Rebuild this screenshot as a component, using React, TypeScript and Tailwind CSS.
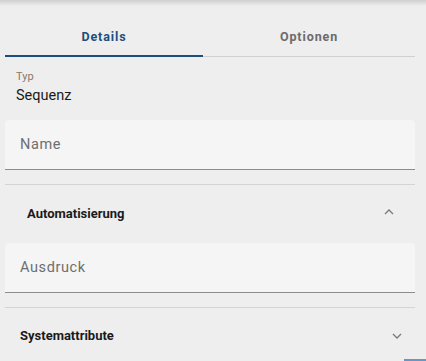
import React from "react"

function ChevronUp({ className }: { className?: string }) {
  return (
    <svg width="12" height="8" viewBox="0 0 12 8" className={className} fill="none" stroke="currentColor" strokeWidth="1.3">
      <path d="M2 6 L6 2 L10 6" />
    </svg>
  )
}

function ChevronDown({ className }: { className?: string }) {
  return (
    <svg width="12" height="8" viewBox="0 0 12 8" className={className} fill="none" stroke="currentColor" strokeWidth="1.3">
      <path d="M2 2 L6 6 L10 2" />
    </svg>
  )
}

function Field({ label }: { label: string }) {
  return (
    <div className="h-[50px] bg-[#f5f5f5] rounded-t-[4px] border-b border-[#8c8c8c] flex items-center px-[15px]">
      <span className="text-[14.5px] tracking-[0.6px] text-[#6e6e6e]">{label}</span>
    </div>
  )
}

export default function App() {
  return (
    <div
      className="relative w-[426px] h-[361px] bg-[#eeeeee] overflow-hidden"
      style={{ fontFamily: "Roboto, 'Liberation Sans', sans-serif" }}
    >
      <div className="absolute top-0 left-0 right-0 h-[6px] bg-gradient-to-b from-[#cfcfcf] to-transparent" />

      <div className="ml-[5px] w-[410px] pt-[15px]">
        {/* Tabs */}
        <div className="flex h-[42px] border-b border-[#d0d0d0]">
          <div className="w-[198px] flex items-center justify-center border-b-2 border-[#1d4f7c] -mb-px">
            <span className="text-[12.5px] font-bold tracking-[0.9px] text-[#1d4f7c] mt-[4px]">Details</span>
          </div>
          <div className="flex-1 flex items-center justify-center">
            <span className="text-[12.5px] font-bold tracking-[0.9px] text-[#6b6b6b] mt-[4px]">Optionen</span>
          </div>
        </div>

        {/* Typ */}
        <div className="pl-[11px] pt-[13px] h-[63px]">
          <div className="text-[11px] leading-[13px] text-[#8a7868]">Typ</div>
          <div className="text-[14.5px] leading-[18px] mt-[4px] text-[#1a1a1a]">Sequenz</div>
        </div>

        <Field label="Name" />

        <div className="mt-[14px] border-t border-[#d4d4d4]" />

        {/* Automatisierung */}
        <div className="h-[58px] flex items-center justify-between pl-[22px] pr-[20px]">
          <span className="text-[13px] font-bold text-[#1a1a1a]">Automatisierung</span>
          <ChevronUp className="text-[#7a7a7a] -mt-[4px]" />
        </div>

        <Field label="Ausdruck" />

        <div className="mt-[14px] border-t border-[#d4d4d4]" />

        {/* Systemattribute */}
        <div className="h-[54px] flex items-center justify-between pl-[15px] pr-[12px]">
          <span className="text-[13px] font-bold text-[#1a1a1a] mt-[1px]">Systemattribute</span>
          <ChevronDown className="text-[#7a7a7a] mt-[2px]" />
        </div>
      </div>

      <div className="absolute bottom-0 right-0 w-[22px] h-[2px] bg-[#6b95c2]" />
    </div>
  )
}
